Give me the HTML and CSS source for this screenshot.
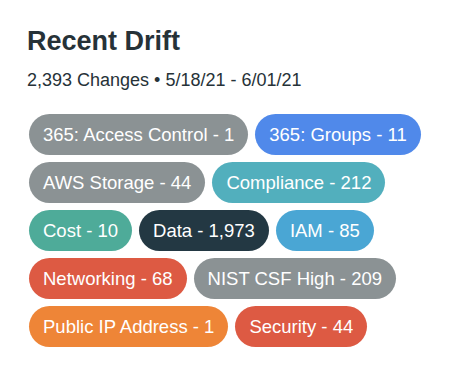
FILE: index.html
```html
<!DOCTYPE html>
<html lang="en">
<head>
    <meta charset="UTF-8">
    <meta name="viewport" content="width=device-width, initial-scale=1.0">
    <title>Recent Drift</title>
    <link rel="stylesheet" href="styles.css">
</head>
<body>
    <div class="drift">
        <h2>Recent Drift</h2>
        <p class="summary">2,393 Changes &bull; 5/18/21 - 6/01/21</p>
        <div class="tags">
            <span class="tag gray">365: Access Control - 1</span>
            <span class="tag blue">365: Groups - 11</span>
            <span class="tag gray">AWS Storage - 44</span>
            <span class="tag teal">Compliance - 212</span>
            <span class="tag green">Cost - 10</span>
            <span class="tag dark">Data - 1,973</span>
            <span class="tag sky">IAM - 85</span>
            <span class="tag red">Networking - 68</span>
            <span class="tag gray">NIST CSF High - 209</span>
            <span class="tag orange">Public IP Address - 1</span>
            <span class="tag red">Security - 44</span>
        </div>
    </div>
</body>
</html>
```

FILE: styles.css
```css
body {
    font-family: "Liberation Sans", Arial, sans-serif;
    margin: 0;
    background: white;
    color: #263238;
}

.drift {
    padding: 26px 29px;
}

.drift h2 {
    margin: 0;
    font-size: 27px;
    font-weight: bold;
    color: #263238;
    margin-left: -2px;
}

.summary {
    margin: 13px 0 0;
    font-size: 18px;
    color: #263238;
    margin-left: -2px;
}

.tags {
    display: flex;
    flex-wrap: wrap;
    gap: 7px 7px;
    margin-top: 23px;
    max-width: 400px;
}

.tag {
    display: inline-block;
    height: 41px;
    line-height: 41px;
    padding: 0 14px;
    border-radius: 21px;
    color: white;
    font-size: 18.5px;
    white-space: nowrap;
    box-sizing: border-box;
}

.gray { background: #8b9294; }
.blue { background: #5089ea; }
.teal { background: #52afbd; }
.green { background: #4eab99; }
.dark { background: #233843; }
.sky { background: #4aa6d4; }
.red { background: #dd5a43; }
.orange { background: #ee8537; }
```
